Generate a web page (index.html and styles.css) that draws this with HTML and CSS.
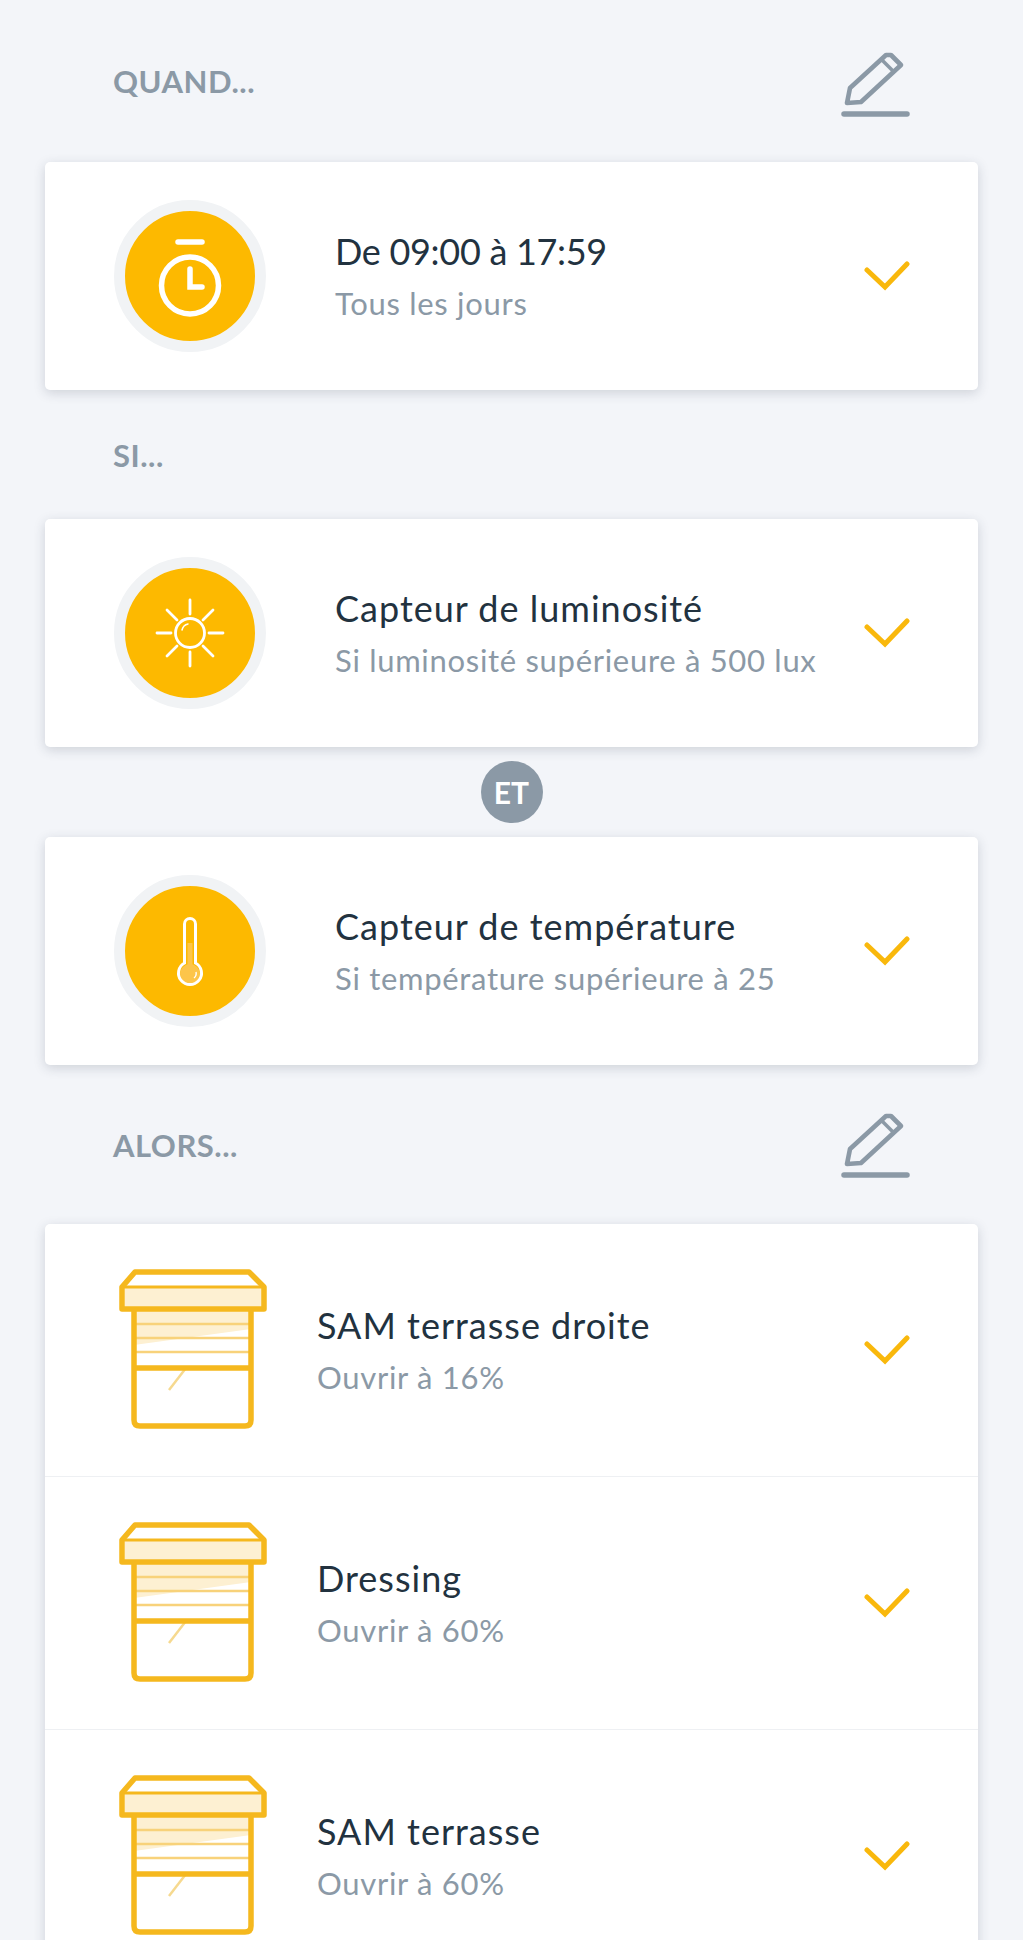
FILE: index.html
```html
<!DOCTYPE html>
<html lang="fr">
<head>
<meta charset="UTF-8">
<meta name="viewport" content="width=device-width, initial-scale=1.0">
<title>Scénario</title>
<link rel="stylesheet" href="styles.css">
</head>
<body>
    <svg class="defs" width="0" height="0">
        <defs>
            <symbol id="pencil" viewBox="20 15 72 72">
                <path d="M27 73 L30 58 L66 25 L71 25 L81 35 L41 72 Z" fill="none" stroke="#8b99a6" stroke-width="4.6" stroke-linejoin="round"/>
                <path d="M62 30 L74 42" fill="none" stroke="#8b99a6" stroke-width="3.5"/>
                <path d="M24 84 L87 84" fill="none" stroke="#8b99a6" stroke-width="5.5" stroke-linecap="round"/>
            </symbol>
            <symbol id="check" viewBox="0 0 48 32">
                <path d="M5 10 L23 27 L45 4" fill="none" stroke="#f9b80c" stroke-width="5" stroke-linecap="round" stroke-linejoin="miter"/>
            </symbol>
            <symbol id="blind" viewBox="15 12 156 166">
                <path d="M26 33 H163 V53 H26 Z" fill="#fdf0d2"/>
                <path d="M35 55 H152 V74 L35 90 Z" fill="#fdf0d2"/>
                <path d="M35 69 H150 M35 83 H150 M35 97 H150" fill="none" stroke="#f8d27a" stroke-width="2.5"/>
                <path d="M87 113 L70 135" fill="none" stroke="#f6d98f" stroke-width="2.5"/>
                <path d="M24 32 H164" fill="none" stroke="#f5b81e" stroke-width="3"/>
                <path d="M23 32 L36 17 H150 L165 32 V54 H23 Z" fill="none" stroke="#f5b81e" stroke-width="5.5" stroke-linejoin="round"/>
                <path d="M35 55 V165 Q35 171 41 171 H146 Q152 171 152 165 V55 M35 113 H152" fill="none" stroke="#f5b81e" stroke-width="5.5"/>
            </symbol>
        </defs>
    </svg>

    <div class="screen">
        <div class="section-head">
            <span class="section-title">QUAND...</span>
            <svg class="edit"><use href="#pencil"/></svg>
        </div>

        <div class="card">
            <div class="row">
                <div class="badge">
                    <svg viewBox="0 0 130 130" width="130" height="130">
                        <g fill="none" stroke="#fff" stroke-width="5.5" stroke-linecap="round" transform="translate(-11 -11)">
                            <circle cx="76" cy="85.5" r="28.5"/>
                            <path d="M64 42 H88"/>
                            <path d="M76 69 V87 H88"/>
                        </g>
                    </svg>
                </div>
                <div class="text">
                    <div class="name name-time">De 09:00 à 17:59</div>
                    <div class="detail">Tous les jours</div>
                </div>
                <svg class="tick"><use href="#check"/></svg>
            </div>
        </div>

        <div class="section-head section-head-small">
            <span class="section-title">SI...</span>
        </div>

        <div class="card">
            <div class="row">
                <div class="badge">
                    <svg viewBox="-65 -65 130 130" width="130" height="130">
                        <g fill="none" stroke="#fff" stroke-width="2.8" stroke-linecap="round">
                            <circle r="14.5"/>
                            <path d="M-8 -3 A8 8 0 0 1 -2 -9" stroke-width="1.5"/>
                            <path d="M-33 0 H-19 M19 0 H33 M0 -33 V-19 M0 19 V33"/>
                            <path d="M-23 -23 L-13 -13 M23 -23 L13 -13 M-23 23 L-13 13 M23 23 L13 13"/>
                        </g>
                    </svg>
                </div>
                <div class="text">
                    <div class="name">Capteur de luminosité</div>
                    <div class="detail">Si luminosité supérieure à 500 lux</div>
                </div>
                <svg class="tick"><use href="#check"/></svg>
            </div>
        </div>

        <div class="joiner"><span class="joiner-badge">ET</span></div>

        <div class="card">
            <div class="row">
                <div class="badge">
                    <svg viewBox="-65 -65 130 130" width="130" height="130">
                        <path d="M-2.5 -8 H2.5 V14 H-2.5 Z" fill="#fdc54a"/>
                        <circle cy="23" r="10" fill="#fdc54a"/>
                        <path d="M-5.5 12 V-27 A5.5 5.5 0 0 1 5.5 -27 V12 A11.5 11.5 0 1 1 -5.5 12 Z" fill="none" stroke="#fff" stroke-width="3"/>
                        <path d="M4 27 A6 6 0 0 0 6 21" fill="none" stroke="#fff" stroke-width="1.4"/>
                    </svg>
                </div>
                <div class="text">
                    <div class="name">Capteur de température</div>
                    <div class="detail">Si température supérieure à 25</div>
                </div>
                <svg class="tick"><use href="#check"/></svg>
            </div>
        </div>

        <div class="section-head section-head-alors">
            <span class="section-title">ALORS...</span>
            <svg class="edit"><use href="#pencil"/></svg>
        </div>

        <div class="card">
            <div class="row row-device">
                <svg class="blind"><use href="#blind"/></svg>
                <div class="text">
                    <div class="name">SAM terrasse droite</div>
                    <div class="detail">Ouvrir à 16%</div>
                </div>
                <svg class="tick"><use href="#check"/></svg>
            </div>
            <div class="row row-device">
                <svg class="blind"><use href="#blind"/></svg>
                <div class="text">
                    <div class="name">Dressing</div>
                    <div class="detail">Ouvrir à 60%</div>
                </div>
                <svg class="tick"><use href="#check"/></svg>
            </div>
            <div class="row row-device">
                <svg class="blind"><use href="#blind"/></svg>
                <div class="text">
                    <div class="name">SAM terrasse</div>
                    <div class="detail">Ouvrir à 60%</div>
                </div>
                <svg class="tick"><use href="#check"/></svg>
            </div>
        </div>
    </div>
</body>
</html>
```

FILE: styles.css
```css
body {
    font-family: Lato, "Open Sans", sans-serif;
    background-color: #ffffff;
    margin: 0;
    padding: 0;
}
.defs {
    display: block;
    height: 0;
}
.screen {
    height: 1940px;
    padding: 0 45px;
    overflow: hidden;
    background-color: #f3f5f9;
}
.section-head {
    display: flex;
    align-items: center;
    justify-content: space-between;
    height: 162px;
    padding: 0 66px 0 68px;
}
.section-head-small {
    height: 129px;
    padding-top: 1px;
    box-sizing: border-box;
}
.section-head-alors {
    height: 159px;
}
.section-head-alors .edit {
    margin-top: -6px;
}
.section-title {
    font-size: 31px;
    font-weight: 700;
    letter-spacing: 0.5px;
    color: #8b99a6;
}
.edit {
    width: 72px;
    height: 72px;
}
.card {
    background-color: #ffffff;
    border-radius: 5px;
    box-shadow: 0 3px 12px rgba(40, 50, 70, 0.18);
}
.row {
    display: flex;
    align-items: center;
    height: 228px;
    padding: 0 68px 0 69px;
}
.row-device {
    height: 252px;
    border-bottom: 1px solid #eef0f3;
}
.badge {
    flex: none;
    display: flex;
    align-items: center;
    justify-content: center;
    width: 130px;
    height: 130px;
    border: 11px solid #f1f3f5;
    border-radius: 50%;
    background-color: #fdb900;
}
.text {
    flex: 1;
    margin-left: 69px;
    padding-top: 1px;
}
.row-device .text {
    margin-left: 47px;
}
.name {
    font-size: 36px;
    line-height: 46px;
    letter-spacing: 1px;
    color: #22323f;
}
.name-time {
    letter-spacing: -0.3px;
}
.detail {
    font-size: 31px;
    line-height: 46px;
    letter-spacing: 0.7px;
    margin-top: 6px;
    color: #8b99a6;
}
.tick {
    flex: none;
    width: 48px;
    height: 32px;
}
.blind {
    flex: none;
    width: 156px;
    height: 166px;
}
.joiner {
    display: flex;
    align-items: center;
    justify-content: center;
    height: 90px;
}
.joiner-badge {
    display: flex;
    align-items: center;
    justify-content: center;
    width: 62px;
    height: 62px;
    border-radius: 50%;
    background-color: #8b99a6;
    color: #ffffff;
    font-size: 30px;
    font-weight: 700;
}
```
